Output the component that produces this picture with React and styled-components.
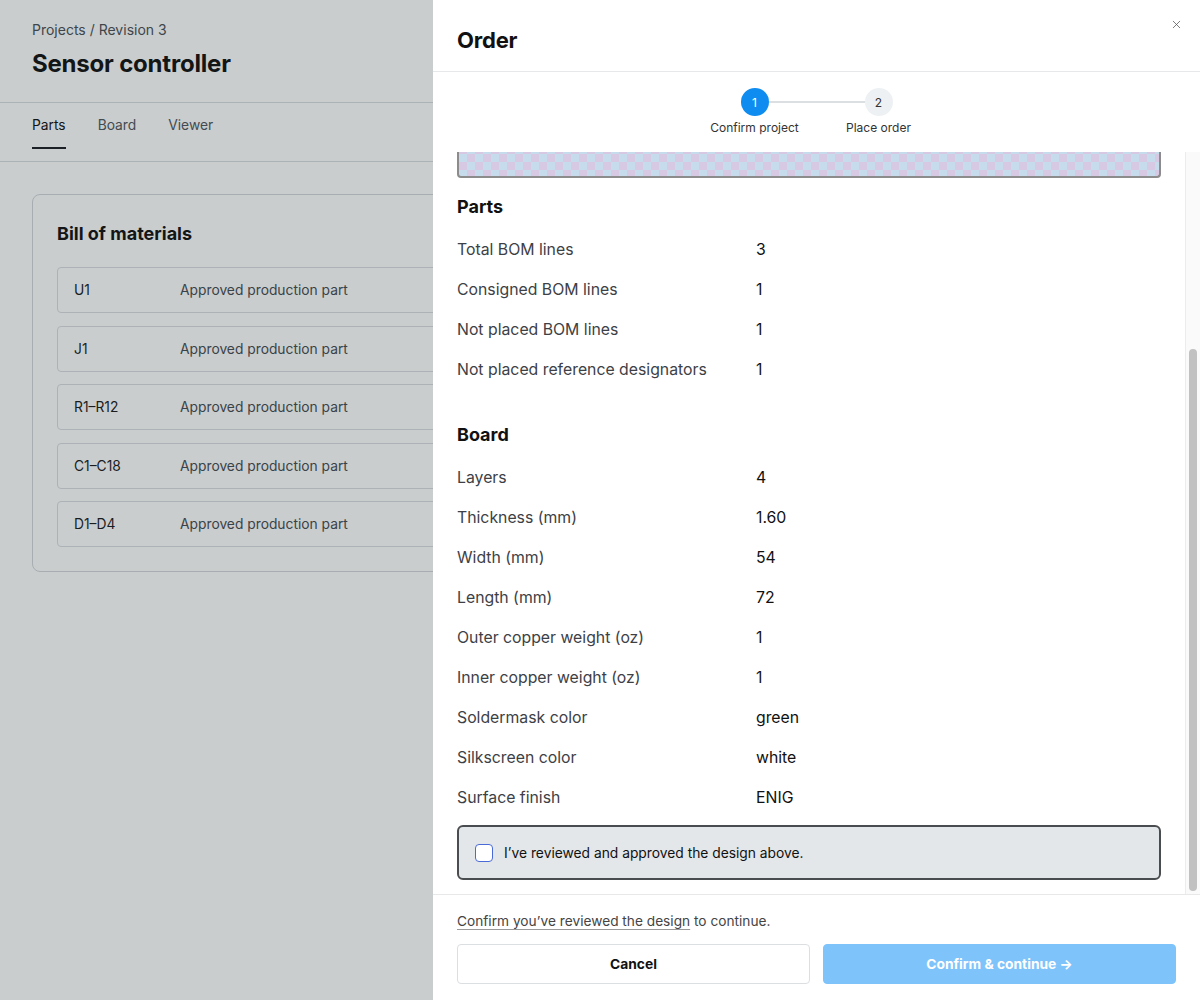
import React, { useLayoutEffect, useRef } from 'react';
import styled, { createGlobalStyle } from 'styled-components';
import { X } from 'lucide-react';

const GlobalStyle = createGlobalStyle`
  * { box-sizing: border-box; }
  html, body { margin: 0; padding: 0; background: #fff; }
  body {
    font-family: Inter, "Noto Sans", "Liberation Sans", sans-serif;
    color: #111;
    -webkit-font-smoothing: antialiased;
  }
`;

const bom = [
  { ref: 'U1', status: 'Approved production part' },
  { ref: 'J1', status: 'Approved production part' },
  { ref: 'R1–R12', status: 'Approved production part' },
  { ref: 'C1–C18', status: 'Approved production part' },
  { ref: 'D1–D4', status: 'Approved production part' },
];

const parts = [
  ['Total BOM lines', '3'],
  ['Consigned BOM lines', '1'],
  ['Not placed BOM lines', '1'],
  ['Not placed reference designators', '1'],
];

const board = [
  ['Layers', '4'],
  ['Thickness (mm)', '1.60'],
  ['Width (mm)', '54'],
  ['Length (mm)', '72'],
  ['Outer copper weight (oz)', '1'],
  ['Inner copper weight (oz)', '1'],
  ['Soldermask color', 'green'],
  ['Silkscreen color', 'white'],
  ['Surface finish', 'ENIG'],
];

export default function App() {
  const scrollRef = useRef(null);

  useLayoutEffect(() => {
    const el = scrollRef.current;
    if (el) el.scrollTop = el.scrollHeight;
  }, []);

  return (
    <>
      <GlobalStyle />
      <SPage>
        <SPageHeader>
          <SCrumb>Projects / Revision 3</SCrumb>
          <SPageTitle>Sensor controller</SPageTitle>
        </SPageHeader>
        <STabs>
          <STab $active>Parts</STab>
          <STab>Board</STab>
          <STab>Viewer</STab>
        </STabs>
        <SMain>
          <SCard>
            <SCardTitle>Bill of materials</SCardTitle>
            <SBomList>
              {bom.map((b) => (
                <SBomRow key={b.ref}>
                  <SBomRef>{b.ref}</SBomRef>
                  <SBomStatus>{b.status}</SBomStatus>
                </SBomRow>
              ))}
            </SBomList>
          </SCard>
        </SMain>
      </SPage>

      <SOverlay />

      <SDrawer>
        <SDrawerHeader>
          <SDrawerTitle>Order</SDrawerTitle>
          <SClose aria-label="Close">
            <X size={13} strokeWidth={1.4} />
          </SClose>
        </SDrawerHeader>

        <SStepper>
          <SStep $withLine>
            <SStepDot $active>1</SStepDot>
            <SStepLabel>Confirm project</SStepLabel>
          </SStep>
          <SStep>
            <SStepDot>2</SStepDot>
            <SStepLabel>Place order</SStepLabel>
          </SStep>
        </SStepper>

        <SBody>
          <SScroll ref={scrollRef}>
            <SPreview />

            <SSection>
              <SSectionTitle>Parts</SSectionTitle>
              {parts.map(([k, v]) => (
                <SInfoRow key={k}>
                  <SInfoLabel>{k}</SInfoLabel>
                  <SInfoValue>{v}</SInfoValue>
                </SInfoRow>
              ))}
            </SSection>

            <SSection>
              <SSectionTitle>Board</SSectionTitle>
              {board.map(([k, v]) => (
                <SInfoRow key={k}>
                  <SInfoLabel>{k}</SInfoLabel>
                  <SInfoValue>{v}</SInfoValue>
                </SInfoRow>
              ))}
            </SSection>

            <SApprove>
              <SCheckbox type="checkbox" />
              <span>I’ve reviewed and approved the design above.</span>
            </SApprove>
          </SScroll>
          <SRail>
            <SThumb />
          </SRail>
        </SBody>

        <SFooter>
          <SHint>
            <SHintLink>Confirm you’ve reviewed the design</SHintLink> to continue.
          </SHint>
          <SButtons>
            <SButton>Cancel</SButton>
            <SButton $primary disabled>
              Confirm &amp; continue →
            </SButton>
          </SButtons>
        </SFooter>
      </SDrawer>
    </>
  );
}

const SPage = styled.div`
  min-height: 1000px;
  background: #fff;
`;

const SPageHeader = styled.header`
  padding: 20px 32px 23px;
  border-bottom: 1px solid #d9dde1;
`;

const SCrumb = styled.div`
  font-size: 14px;
  line-height: 20px;
  color: #4a4f55;
`;

const SPageTitle = styled.h1`
  margin: 9px 0 0;
  font-size: 24px;
  line-height: 30px;
  font-weight: 700;
  letter-spacing: -0.2px;
`;

const STabs = styled.nav`
  display: flex;
  gap: 32px;
  padding: 12px 32px 12px;
  border-bottom: 1px solid #d9dde1;
`;

const STab = styled.div`
  font-size: 13.8px;
  line-height: 20px;
  padding-bottom: 12px;
  color: ${(p) => (p.$active ? '#111' : '#50565c')};
  border-bottom: 2px solid ${(p) => (p.$active ? '#1b1f24' : 'transparent')};
`;

const SMain = styled.main`
  padding: 32px;
`;

const SCard = styled.section`
  border: 1px solid #d2d6da;
  border-radius: 8px;
  padding: 27px 24px 24px;
`;

const SCardTitle = styled.h2`
  margin: 0 0 21px;
  font-size: 18px;
  line-height: 24px;
  font-weight: 700;
`;

const SBomList = styled.div`
  display: flex;
  flex-direction: column;
  gap: 12.5px;
`;

const SBomRow = styled.div`
  display: grid;
  grid-template-columns: 106px 1fr;
  align-items: center;
  height: 46px;
  padding: 0 16px;
  border: 1px solid #d8dcdf;
  border-radius: 4px;
  font-size: 13.8px;
`;

const SBomRef = styled.span`
  color: #1a1a1a;
`;

const SBomStatus = styled.span`
  color: #464b50;
`;

const SOverlay = styled.div`
  position: fixed;
  inset: 0;
  background: rgba(28, 38, 44, 0.23);
`;

const SDrawer = styled.aside`
  position: fixed;
  top: 0;
  right: 0;
  bottom: 0;
  width: 767px;
  background: #fff;
  display: flex;
  flex-direction: column;
`;

const SDrawerHeader = styled.div`
  position: relative;
  height: 72px;
  padding: 26px 24px 0;
  border-bottom: 1px solid #e6e8ea;
`;

const SDrawerTitle = styled.h2`
  margin: 0;
  font-size: 22px;
  line-height: 28px;
  font-weight: 700;
  letter-spacing: -0.2px;
`;

const SClose = styled.button`
  position: absolute;
  top: 17px;
  right: 17px;
  width: 14px;
  height: 14px;
  padding: 0;
  border: 0;
  background: none;
  color: #555;
  display: flex;
  align-items: center;
  justify-content: center;
`;

const SStepper = styled.div`
  display: flex;
  justify-content: center;
  padding: 16px 0 16px;
`;

const SStep = styled.div`
  position: relative;
  width: 124px;
  display: flex;
  flex-direction: column;
  align-items: center;
  gap: 4px;

  ${(p) =>
    p.$withLine &&
    `
    &::after {
      content: '';
      position: absolute;
      top: 13px;
      left: calc(50% + 14px);
      width: 96px;
      height: 2px;
      background: #dcdfe2;
    }
  `}
`;

const SStepDot = styled.div`
  width: 28px;
  height: 28px;
  border-radius: 50%;
  display: flex;
  align-items: center;
  justify-content: center;
  font-size: 12px;
  background: ${(p) => (p.$active ? '#0f8cf0' : '#eef1f4')};
  color: ${(p) => (p.$active ? '#fff' : '#333')};
`;

const SStepLabel = styled.div`
  font-size: 12px;
  line-height: 16px;
  color: #333;
  white-space: nowrap;
`;

const SBody = styled.div`
  flex: 1;
  min-height: 0;
  display: flex;
`;

const SScroll = styled.div`
  flex: 1;
  min-width: 0;
  overflow-y: auto;
  padding: 24px 24px 14px;
  scrollbar-width: none;

  &::-webkit-scrollbar {
    display: none;
  }
`;

const SRail = styled.div`
  width: 15px;
  display: flex;
  flex-direction: column;
  justify-content: flex-end;
  padding: 0 3px 3px 3px;
  background: #fafafa;
  border-left: 1px solid #ececec;
`;

const SThumb = styled.div`
  height: 542px;
  border-radius: 4px;
  background: #c1c1c1;
`;

const SPreview = styled.div`
  height: 290px;
  border: 2px solid #8c8c8c;
  border-top-color: #b5b5b5;
  border-radius: 4px;
  background: repeating-conic-gradient(#c6dced 0 25%, #d7c9e3 0 50%) 0 0 / 16px 16px;
  margin-bottom: 18px;
`;

const SSection = styled.section`
  & + & {
    margin-top: 35px;
  }
`;

const SSectionTitle = styled.h3`
  margin: 0 0 11px;
  font-size: 18px;
  line-height: 22px;
  font-weight: 700;
`;

const SInfoRow = styled.div`
  display: grid;
  grid-template-columns: 299px 1fr;
  align-items: center;
  height: 40px;
  font-size: 15.8px;
`;

const SInfoLabel = styled.span`
  color: #3d4146;
`;

const SInfoValue = styled.span`
  color: #111;
`;

const SApprove = styled.label`
  margin-top: 8px;
  display: flex;
  align-items: center;
  gap: 11px;
  height: 55px;
  padding: 0 16px;
  background: #e4e7e9;
  border: 2px solid #4a4d50;
  border-radius: 6px;
  font-size: 13.8px;
  color: #111;
`;

const SCheckbox = styled.input`
  appearance: none;
  margin: 0;
  width: 18px;
  height: 18px;
  border: 1.5px solid #4a6ad8;
  border-radius: 4px;
  background: #fff;
`;

const SFooter = styled.footer`
  border-top: 1px solid #e6e8ea;
  padding: 16px 24px 16px;
`;

const SHint = styled.p`
  margin: 0 0 13px;
  font-size: 13.7px;
  line-height: 20px;
  color: #444;
`;

const SHintLink = styled.span`
  text-decoration: underline;
  text-decoration-color: #999;
  text-underline-offset: 3px;
`;

const SButtons = styled.div`
  display: grid;
  grid-template-columns: 1fr 1fr;
  gap: 13px;
`;

const SButton = styled.button`
  height: 40px;
  border-radius: 4px;
  font-family: inherit;
  font-size: 13.8px;
  font-weight: 700;
  border: 1px solid ${(p) => (p.$primary ? '#7ec4fa' : '#dcdfe2')};
  background: ${(p) => (p.$primary ? '#7ec4fa' : '#fff')};
  color: ${(p) => (p.$primary ? '#fff' : '#111')};
`;
